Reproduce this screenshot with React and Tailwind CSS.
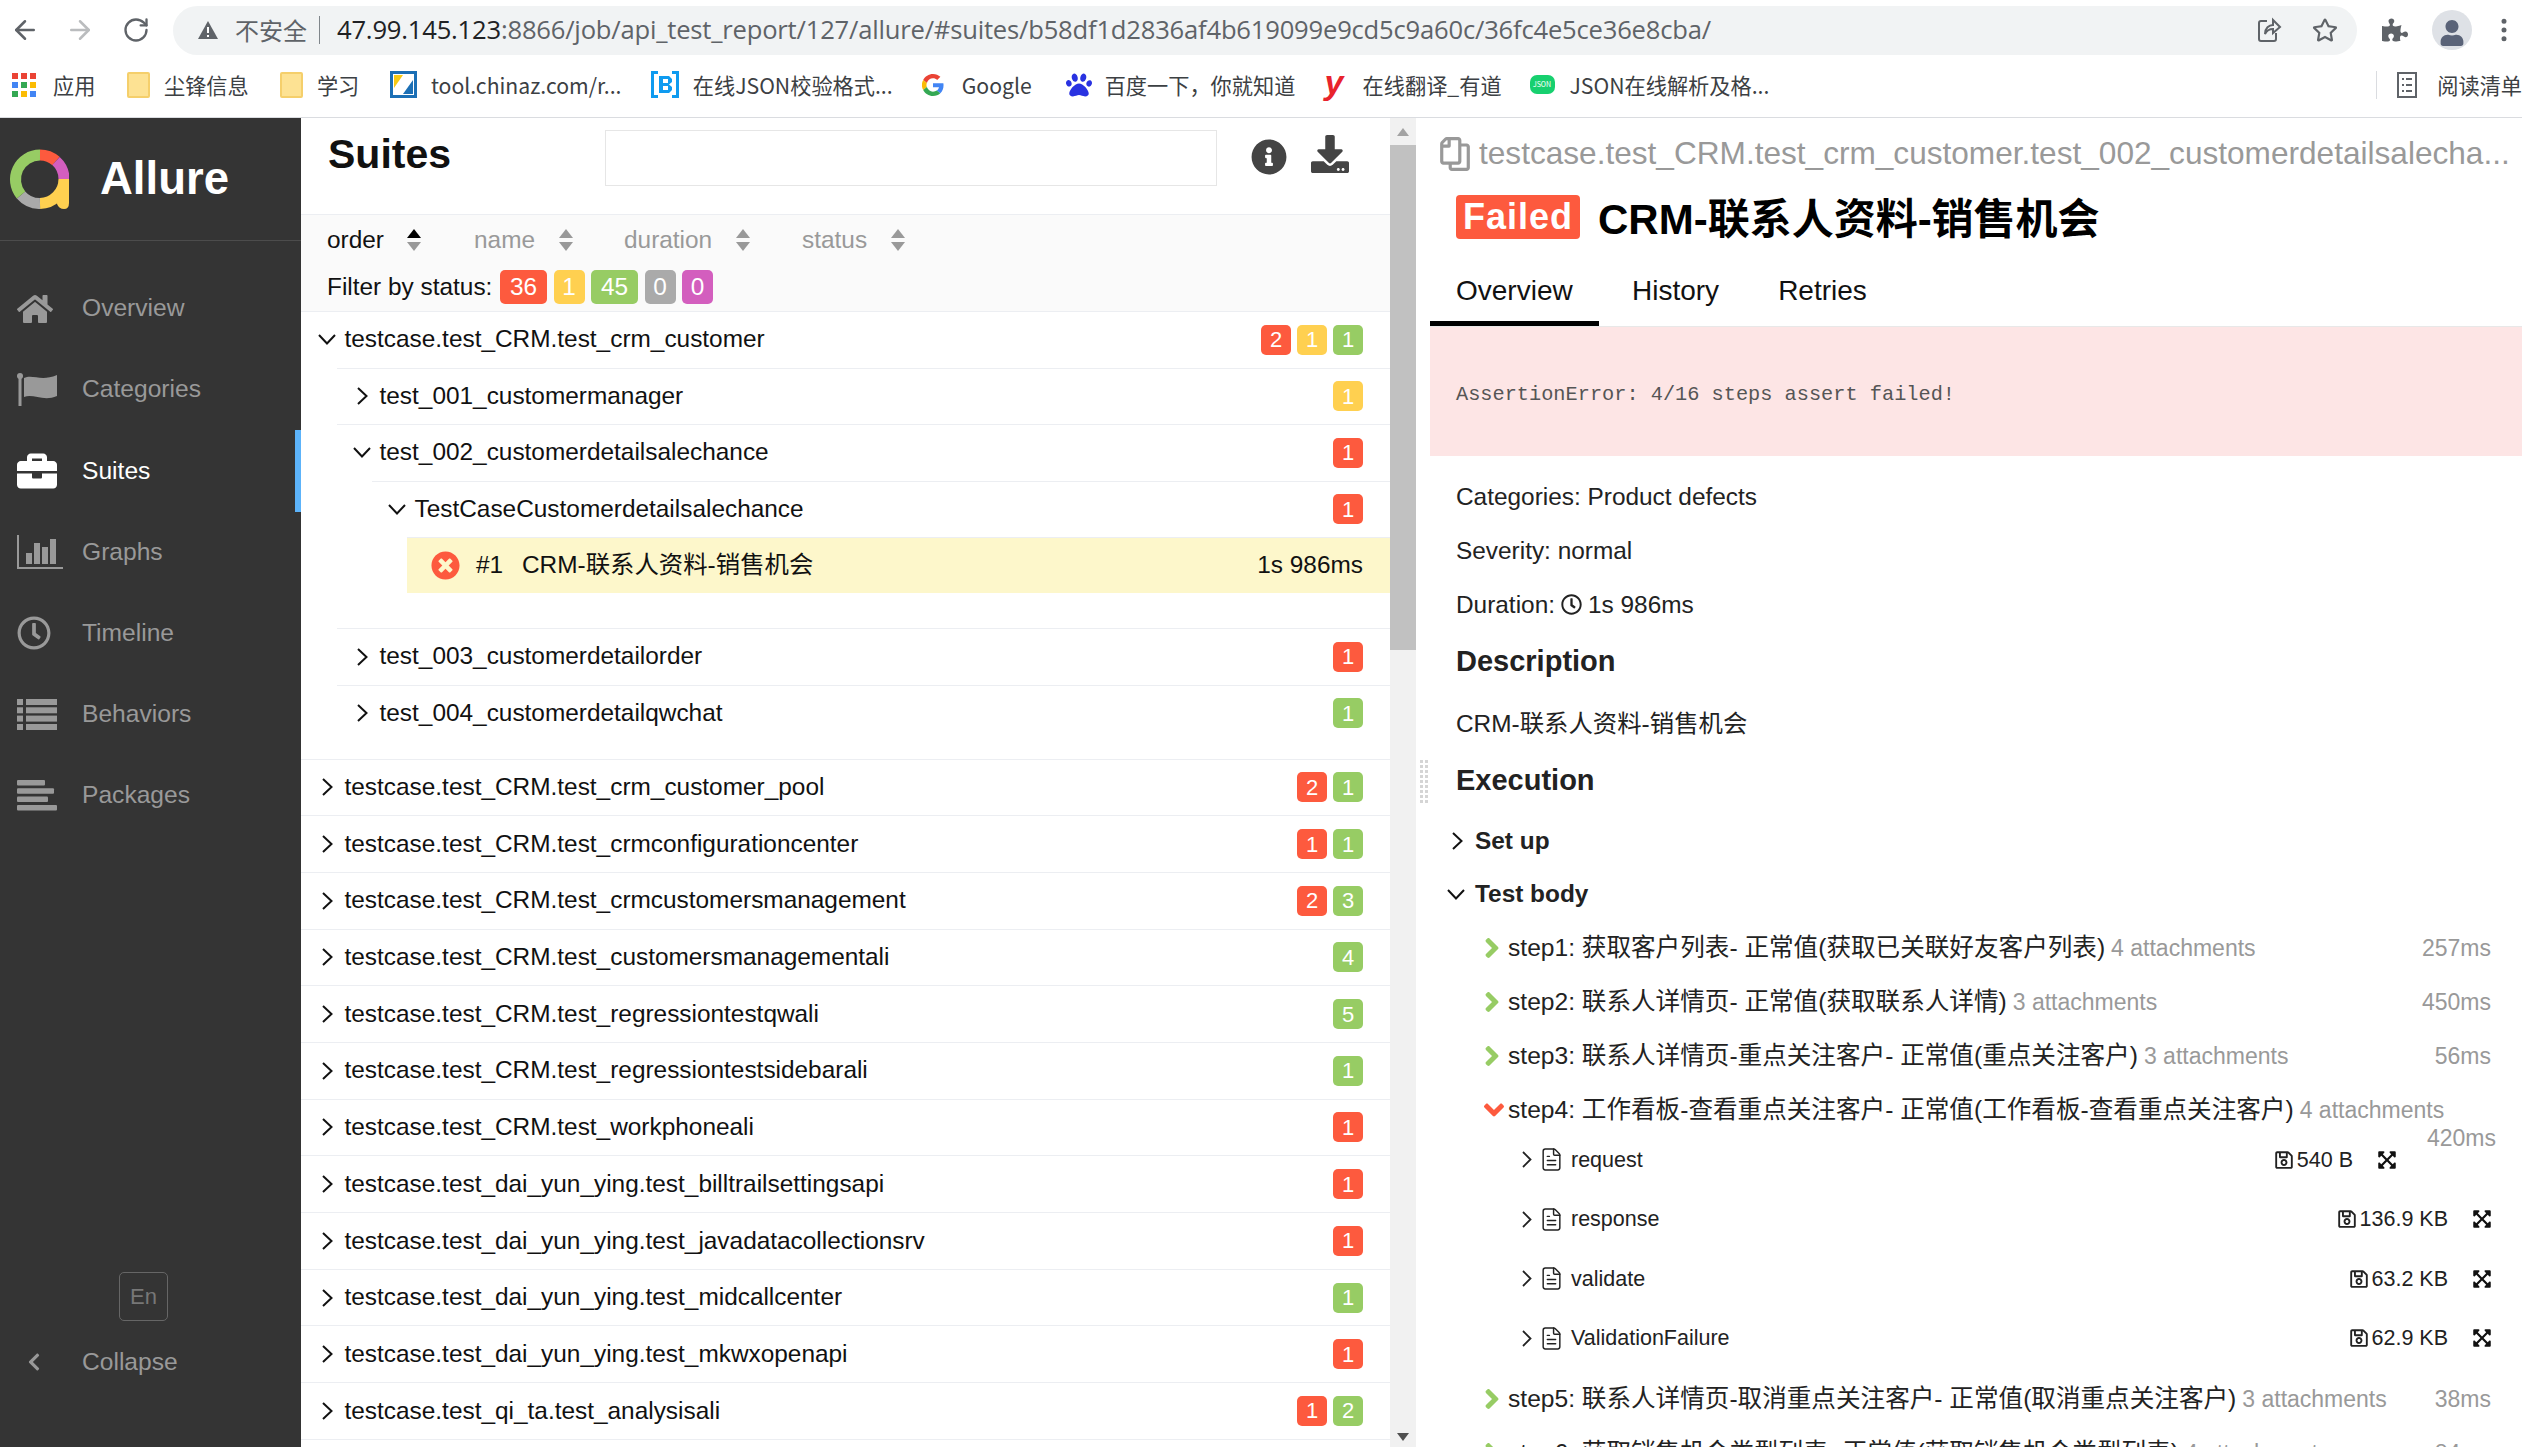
import {
  FaHome, FaBriefcase, FaRegClock, FaInfoCircle, FaDownload, FaTimesCircle, FaRegSave,
  FaExpandArrowsAlt, FaAngleRight, FaAngleDown, FaRegCopy, FaPuzzlePiece, FaRegStar, FaUser, FaPaw, FaChevronLeft,
} from 'react-icons/fa'
import { ArrowLeft, ArrowRight, RotateCw, EllipsisVertical, FileText } from 'lucide-react'

const sans = "font-['Liberation_Sans','Noto_Sans_CJK_SC',sans-serif]"

function FlagIcon() {
  return (
    <svg width="40" height="33" viewBox="0 0 40 33" fill="currentColor">
      <circle cx="3" cy="3" r="3" /><rect x="1.500" y="3" width="3" height="30" />
      <path d="M7 5 C16 1 24 9 40 2 V23 C26 29 16 20 7 24 Z" />
    </svg>
  )
}

function GraphIcon() {
  return (
    <svg width="46" height="34" viewBox="0 0 46 34" fill="currentColor" className="overflow-visible">
      <rect x="0" y="0" width="2" height="34" /><rect x="0" y="32" width="46" height="2" />
      <rect x="9" y="18" width="6" height="11" /><rect x="17" y="8" width="6" height="21" />
      <rect x="25" y="12" width="6" height="17" /><rect x="33" y="4" width="6" height="25" />
    </svg>
  )
}

function ListIcon() {
  return (
    <svg width="40" height="31" viewBox="0 0 40 31" fill="currentColor">
      {[0, 8.300, 16.600, 25].map((y) => (
        <g key={y}><rect x="0" y={y} width="6" height="6" /><rect x="9" y={y} width="31" height="6" /></g>
      ))}
    </svg>
  )
}

function PackagesIcon() {
  return (
    <svg width="40" height="31" viewBox="0 0 40 31" fill="currentColor">
      <rect x="0" y="0" width="28" height="5.500" rx="1" /><rect x="0" y="8.300" width="37" height="5.500" rx="1" />
      <rect x="0" y="16.600" width="31" height="5.500" rx="1" /><rect x="0" y="25" width="40" height="5.500" rx="1" />
    </svg>
  )
}

const nav = [
  { icon: <FaHome className="h-[36px] w-[36px]" />, label: 'Overview' },
  { icon: <FlagIcon />, label: 'Categories' },
  { icon: <FaBriefcase className="h-[40px] w-[40px]" />, label: 'Suites', active: true },
  { icon: <GraphIcon />, label: 'Graphs' },
  { icon: <FaRegClock className="h-[34px] w-[34px]" />, label: 'Timeline' },
  { icon: <ListIcon />, label: 'Behaviors' },
  { icon: <PackagesIcon />, label: 'Packages' },
]

const suites = [
  ['testcase.test_CRM.test_crm_customer_pool', [['f', 2], ['p', 1]]],
  ['testcase.test_CRM.test_crmconfigurationcenter', [['f', 1], ['p', 1]]],
  ['testcase.test_CRM.test_crmcustomersmanagement', [['f', 2], ['p', 3]]],
  ['testcase.test_CRM.test_customersmanagementali', [['p', 4]]],
  ['testcase.test_CRM.test_regressiontestqwali', [['p', 5]]],
  ['testcase.test_CRM.test_regressiontestsidebarali', [['p', 1]]],
  ['testcase.test_CRM.test_workphoneali', [['f', 1]]],
  ['testcase.test_dai_yun_ying.test_billtrailsettingsapi', [['f', 1]]],
  ['testcase.test_dai_yun_ying.test_javadatacollectionsrv', [['f', 1]]],
  ['testcase.test_dai_yun_ying.test_midcallcenter', [['p', 1]]],
  ['testcase.test_dai_yun_ying.test_mkwxopenapi', [['f', 1]]],
  ['testcase.test_qi_ta.test_analysisali', [['f', 1], ['p', 2]]],
]

const badgeBg = { f: 'bg-[#fd5a3e]', b: 'bg-[#ffd050]', p: 'bg-[#97cc64]', s: 'bg-[#aaaaaa]', u: 'bg-[#d35ebe]' }

function Badge({ kind, n }) {
  return (
    <span className={`flex h-[30px] w-[30px] items-center justify-center rounded-[5px] text-[22px] text-white ${badgeBg[kind]}`}>{n}</span>
  )
}

function SortIcon({ up }) {
  return (
    <svg width="16" height="24" viewBox="0 0 16 24" className="ml-[22.500px]">
      <path d="M8 1 L15 10 H1 Z" fill={up ? '#000' : '#999'} />
      <path d="M8 23 L15 14 H1 Z" fill="#999" />
    </svg>
  )
}

function Chevron({ open, className = 'text-[#111]' }) {
  return (
    <span className={`flex w-[22px] shrink-0 items-center justify-center ${className}`}>
      {open ? (
        <svg width="18" height="11" viewBox="0 0 18 11" fill="none" stroke="currentColor" strokeWidth="2"><path d="M1 1 L9 9.500 L17 1" /></svg>
      ) : (
        <svg width="11" height="18" viewBox="0 0 11 18" fill="none" stroke="currentColor" strokeWidth="2"><path d="M1 1 L9.500 9 L1 17" /></svg>
      )}
    </span>
  )
}

// one row of the suite tree, indent is the x of the row's left edge in the pane
function TreeRow({ name, open, badges, indent, last, tall }) {
  const height = last ? 'h-[55.500px]' : tall ? 'h-[56.700px] border-b border-[#eceef2]' : 'h-[56.500px] border-b border-[#eceef2]'
  return (
    <div className={`pr-[27px] ${height}`}>
      <div className="flex h-full items-center" style={{ paddingLeft: indent }}>
        <Chevron open={open} />
        <span className="ml-[6.500px] flex-1 text-[24.400px] text-[#111]">{name}</span>
        <span className="flex gap-[6px]">
          {badges.map(([k, n], i) => <Badge key={i} kind={k} n={n} />)}
        </span>
      </div>
    </div>
  )
}

function Step({ name, att, ms }) {
  return (
    <div className="flex h-[54px] items-center pl-[55px] pr-[31px]">
      <FaAngleRight size={32} className="-ml-[3px] w-[20px] shrink-0 text-[#97cc64]" />
      <span className="ml-[6px] text-[24.600px] text-[#222]">{name}</span>
      <span className="ml-[6px] flex-1 text-[23px] text-[#999]">{att}</span>
      <span className="text-[23px] text-[#999]">{ms}</span>
    </div>
  )
}

function Attachment({ name, size, first }) {
  return (
    <div className={`flow-root ${first ? '-mt-[7px]' : ''}`}>
      <div className="flex h-[59.500px] items-center pl-[92px] pr-[30px]">
        <svg width="10" height="17" viewBox="0 0 10 17" fill="none" stroke="#222" strokeWidth="1.800" className="shrink-0"><path d="M1 1 L8.500 8.500 L1 16" /></svg>
        <FileText size={25} strokeWidth={1.400} className="ml-[7px] shrink-0 text-[#222]" />
        <span className="ml-[7px] flex-1 text-[21.500px] text-[#222]">{name}</span>
        <FaRegSave size={20} className="mr-[3px] text-[#222]" />
        <span className="text-[21.500px] text-[#222]">{size}</span>
        <FaExpandArrowsAlt size={20} className="ml-[24px] text-[#111]" />
      </div>
    </div>
  )
}

function Bookmark({ icon, label, w }) {
  return (
    <div className="flex items-center" style={{ width: w }}>
      {icon}
      <span className="whitespace-nowrap">{label}</span>
    </div>
  )
}

function Folder() {
  return <span className="mr-[14px] h-[26px] w-[23px] rounded-[2px] border-2 border-[#f5cf6b] bg-[#fde293]" />
}

function AppsGrid() {
  const c = ['#ea4335', '#ea4335', '#ea4335', '#4285f4', '#34a853', '#fbbc04', '#34a853', '#fbbc04', '#4285f4']
  return (
    <span className="mr-[17px] grid h-[24px] w-[24px] grid-cols-3 gap-[3px]">
      {c.map((col, i) => <span key={i} style={{ background: col }} />)}
    </span>
  )
}

function ShareIcon() {
  return (
    <svg width="28" height="28" viewBox="0 0 28 28" fill="none" stroke="#5f6368" strokeWidth="2" className="ml-auto shrink-0">
      <path d="M12 5 H6 a2 2 0 0 0 -2 2 V23 a2 2 0 0 0 2 2 H19 a2 2 0 0 0 2 -2 V17" />
      <path d="M10 18 C10 12 14 9 18 9 V4 L25 11 L18 17 V13 C14 13 11.500 15 10 18 Z" />
    </svg>
  )
}

function ChromeBar() {
  return (
    <div className="h-[118px] border-b border-[#dadce0] bg-white font-['Noto_Sans_CJK_SC','Open_Sans',sans-serif] text-[#5f6368]">
      <div className="flex h-[59px] items-center pt-[1px]">
        <ArrowLeft size={30} className="ml-[10px] text-[#5f6368]" />
        <ArrowRight size={30} className="ml-[25px] text-[#babcbe]" />
        <RotateCw size={28} className="ml-[27px] text-[#5f6368]" />
        <div className="ml-[23px] flex h-[49px] w-[2184px] items-center rounded-full bg-[#f1f3f4] pl-[24px] pr-[19px]">
          <svg width="22" height="20" viewBox="0 0 22 20"><path d="M11 1 L21 19 H1 Z" fill="#5f6368" /><rect x="10" y="7" width="2" height="6" fill="#fff" /><rect x="10" y="15" width="2" height="2" fill="#fff" /></svg>
          <span className="ml-[16px] text-[24px] leading-none">不安全</span>
          <span className="ml-[12px] h-[28px] w-[1px] bg-[#80868b]" />
          <span className="ml-[17px] font-['Open_Sans',sans-serif] text-[25.600px] tracking-[-0.2px]">
            <span className="text-[#202124]">47.99.145.123</span>:8866/job/api_test_report/127/allure/#suites/b58df1d2836af4b619099e9cd5c9a60c/36fc4e5ce36e8cba/
          </span>
          <ShareIcon />
          <FaRegStar size={26} className="ml-[29px] text-[#5f6368]" />
        </div>
        <FaPuzzlePiece size={26} className="ml-[25px] text-[#5f6368]" />
        <span className="ml-[24px] flex h-[40px] w-[40px] items-center justify-center overflow-hidden rounded-full bg-[#dee1e6]">
          <FaUser size={26} className="mt-[6px] text-[#5a6378]" />
        </span>
        <EllipsisVertical size={30} className="ml-[17px] text-[#5f6368]" />
      </div>
      <div className="-mt-[3px] flex h-[58px] items-center pl-[12px] text-[21.200px] text-[#3c4043]">
        <Bookmark w={115} icon={<AppsGrid />} label="应用" />
        <Bookmark w={153} icon={<Folder />} label="尘锋信息" />
        <Bookmark w={110} icon={<Folder />} label="学习" />
        <Bookmark
          w={261}
          icon={
            <svg width="27" height="27" viewBox="0 0 27 27" className="mr-[14px] shrink-0">
              <rect x="1.500" y="1.500" width="24" height="24" fill="#fff" stroke="#1b6fb5" strokeWidth="3" />
              <path d="M4 4 L13 4 L4 17 Z" fill="#f6c915" /><path d="M23 9 V23 H13 Z" fill="#1b6fb5" />
            </svg>
          }
          label="tool.chinaz.com/r..."
        />
        <Bookmark
          w={271}
          icon={
            <svg width="28" height="27" viewBox="0 0 28 27" className="mr-[14px] shrink-0">
              <path d="M7 1.500 H1.500 V25.500 H7 M21 1.500 H26.500 V25.500 H21" fill="none" stroke="#0f9bf0" strokeWidth="3" />
              <path d="M8 5 H18 L21 8 V11 L18 13.500 L21 16 V19 L18 22 H8 Z M12 8 V12 H17 V8 Z M12 15 V19 H17 V15 Z" fill="#0f9bf0" fillRule="evenodd" />
            </svg>
          }
          label="在线JSON校验格式..."
        />
        <Bookmark
          w={144}
          icon={
            <svg width="22" height="24" viewBox="0 0 48 48" className="mr-[18px] shrink-0">
              <path fill="#ea4335" d="M24 9.500c3.500 0 6.700 1.200 9.200 3.600l6.900-6.900C35.900 2.400 30.500 0 24 0 14.600 0 6.500 5.400 2.600 13.200l8 6.200C12.500 13.700 17.800 9.500 24 9.500z" />
              <path fill="#4285f4" d="M47 24.500c0-1.600-.1-3.100-.4-4.500H24v9h13c-.6 3-2.200 5.500-4.800 7.200l7.700 6C44.400 38.100 47 31.900 47 24.500z" />
              <path fill="#fbbc05" d="M10.500 28.600A14.500 14.500 0 0 1 10.500 19.400l-8-6.200a24 24 0 0 0 0 21.600z" />
              <path fill="#34a853" d="M24 48c6.500 0 11.900-2.100 15.900-5.800l-7.700-6c-2.200 1.400-4.900 2.300-8.200 2.300-6.200 0-11.500-4.200-13.400-9.900l-8 6.200C6.500 42.600 14.600 48 24 48z" />
            </svg>
          }
          label="Google"
        />
        <Bookmark w={259} icon={<FaPaw size={26} className="mr-[13px] shrink-0 text-[#2932e1]" />} label="百度一下，你就知道" />
        <Bookmark
          w={205}
          icon={<span className="-mt-[6px] mr-[18px] w-[20px] font-['Liberation_Sans',sans-serif] text-[34px] font-bold italic leading-[24px] text-[#e8232c]">y</span>}
          label="在线翻译_有道"
        />
        <Bookmark
          w={847}
          icon={<span className="mr-[15px] flex h-[19px] w-[25px] items-center justify-center rounded-[7px] bg-[#17d06f] text-[7px] leading-none text-white">JSON</span>}
          label="JSON在线解析及格..."
        />
        <span className="h-[28px] w-[1px] bg-[#dadce0]" />
        <svg width="20" height="26" viewBox="0 0 20 26" className="ml-[20px] shrink-0">
          <rect x="1" y="1" width="18" height="24" fill="none" stroke="#5f6368" strokeWidth="2" />
          <path d="M5 7 H7 M9 7 H15 M5 13 H7 M9 13 H15 M5 19 H7 M9 19 H15" stroke="#5f6368" strokeWidth="2" />
        </svg>
        <span className="ml-[20px] whitespace-nowrap">阅读清单</span>
      </div>
    </div>
  )
}

function Logo() {
  return (
    <svg width="62" height="60" viewBox="0 0 62 60" className="shrink-0">
      <g fill="none" strokeWidth="11">
        <path d="M33 6 A24.500 24.500 0 0 1 49 12" stroke="#fd5a3e" />
        <path d="M49 12 A24.500 24.500 0 0 1 57 30" stroke="#d35ebe" />
        <path d="M57 30 A24.500 24.500 0 0 1 33 54.500" stroke="#ffd050" />
        <path d="M33 54.500 A24.500 24.500 0 0 1 14 46" stroke="#aaaaaa" />
        <path d="M14 46 A24.500 24.500 0 0 1 33 6" stroke="#97cc64" />
      </g>
      <path d="M52 30 H62 V54 Q62 60 57 60 Q52 60 50 55 Z" fill="#ffd050" />
    </svg>
  )
}

function Sidebar() {
  return (
    <div className={`flex w-[301px] shrink-0 flex-col bg-[#343434] text-[#999] ${sans}`}>
      <div className="flex h-[123px] items-center border-b border-[#4c4c4c] pl-[7px]">
        <Logo />
        <span className="ml-[31px] text-[45.500px] font-bold text-white">Allure</span>
      </div>
      <div className="mt-[27px]">
        {nav.map(({ icon, label, active }) => (
          <div key={label} className={`relative flex h-[81.200px] items-center pl-[17px] text-[24.600px] ${active ? 'text-white' : 'text-[#999]'}`}>
            <span className="flex w-[40px] shrink-0 items-center">{icon}</span>
            <span className="ml-[25px]">{label}</span>
            {active && <span className="absolute right-0 top-0 h-full w-[6px] bg-[#5cb3fa]" />}
          </div>
        ))}
      </div>
      <div className="mt-auto pb-[60px]">
        <div className="ml-[119px] flex h-[49px] w-[49px] items-center justify-center rounded-[5px] border border-[#666] text-[22px] text-[#777]">En</div>
        <div className="mt-[16px] flex h-[50px] items-center pl-[24px] text-[24.600px]">
          <FaChevronLeft size={20} className="w-[20px] shrink-0" />
          <span className="ml-[38px]">Collapse</span>
        </div>
      </div>
    </div>
  )
}

function SuitesPane() {
  return (
    <div className={`w-[1089px] shrink-0 overflow-hidden bg-white ${sans}`}>
      <div className="flex h-[97px] items-start border-b border-[#eceef2] pl-[27px]">
        <h1 className="mt-[11px] w-[277px] text-[41px] font-bold leading-[50px] text-[#111]">Suites</h1>
        <div className="mt-[12px] h-[56px] w-[612px] border border-[#e6e6e6]" />
        <FaInfoCircle size={36} className="ml-[34px] mt-[21px] text-[#444]" />
        <FaDownload size={38} className="ml-[24px] mt-[17px] text-[#444]" />
      </div>
      <div className="h-[97px] border-b border-[#eceef2] bg-[#fafafa] pl-[26px] text-[24.400px]">
        <div className="flex h-[46px] items-center pt-[4px]">
          <span className="flex w-[147px] items-center text-[#111]">order<SortIcon up /></span>
          <span className="flex w-[150px] items-center text-[#999]">name<SortIcon /></span>
          <span className="flex w-[178px] items-center text-[#999]">duration<SortIcon /></span>
          <span className="flex items-center text-[#999]">status<SortIcon /></span>
        </div>
        <div className="mt-[4px] flex h-[44px] items-center">
          <span className="w-[173px] text-[#111]">Filter by status:</span>
          <div className="flex gap-[6.500px] text-white">
            <span className="flex h-[34px] w-[47px] items-center justify-center rounded-[5px] bg-[#fd5a3e]">36</span>
            <span className="flex h-[34px] w-[31px] items-center justify-center rounded-[5px] bg-[#ffd050]">1</span>
            <span className="flex h-[34px] w-[47px] items-center justify-center rounded-[5px] bg-[#97cc64]">45</span>
            <span className="flex h-[34px] w-[31px] items-center justify-center rounded-[5px] bg-[#aaaaaa]">0</span>
            <span className="flex h-[34px] w-[31px] items-center justify-center rounded-[5px] bg-[#d35ebe]">0</span>
          </div>
        </div>
      </div>

      <TreeRow name="testcase.test_CRM.test_crm_customer" open badges={[['f', 2], ['b', 1], ['p', 1]]} indent={15} last />
      <div className="ml-[36px] border-t border-[#eceef2]">
        <TreeRow name="test_001_customermanager" badges={[['b', 1]]} indent={14} />
        <TreeRow name="test_002_customerdetailsalechance" open badges={[['f', 1]]} indent={14} last />
        <div className="ml-[35px] border-t border-[#eceef2]">
          <TreeRow name="TestCaseCustomerdetailsalechance" open badges={[['f', 1]]} indent={14} last />
          <div className="ml-[35px] flex h-[56px] items-center border-t border-[#eceef2] bg-[#fdf7cb] pl-[24px] pr-[27px] text-[24.400px] text-[#111]">
            <FaTimesCircle size={29} className="shrink-0 text-[#fd5a3e]" />
            <span className="ml-[16px] w-[46px]">#1</span>
            <span className="flex-1">CRM-联系人资料-销售机会</span>
            <span>1s 986ms</span>
          </div>
          <div className="h-[35px]" />
        </div>
        <div className="border-t border-[#eceef2]">
          <TreeRow name="test_003_customerdetailorder" badges={[['f', 1]]} indent={14} />
          <TreeRow name="test_004_customerdetailqwchat" badges={[['p', 1]]} indent={14} last />
        </div>
      </div>
      <div className="h-[18.500px] border-b border-[#eceef2]" />
      {suites.map(([name, badges]) => (
        <TreeRow key={name} name={name} badges={badges} indent={15} tall />
      ))}
    </div>
  )
}

function Scrollbar() {
  return (
    <div className="relative w-[40px] shrink-0 bg-white">
      <div className="h-[1329px] w-[26px] bg-[#f1f1f1]">
        <div className="flex h-[27px] items-center justify-center">
          <span className="h-0 w-0 border-x-[6px] border-b-[8px] border-x-transparent border-b-[#a3a3a3]" />
        </div>
        <div className="h-[505px] bg-[#c1c1c1]" />
      </div>
      <span className="absolute bottom-[6px] left-[7px] h-0 w-0 border-x-[6px] border-t-[8px] border-x-transparent border-t-[#505050]" />
      <div className="absolute left-[30px] top-[642px] grid grid-cols-2 gap-[2px]">
        {Array.from({ length: 18 }).map((_, i) => <span key={i} className="h-[3px] w-[3px] bg-[#d5d5d5]" />)}
      </div>
    </div>
  )
}

function DetailPane() {
  return (
    <div className={`flex-1 overflow-hidden bg-white text-[#222] ${sans}`}>
      <div className="flex h-[70px] items-center pl-[8px] pt-[1px] text-[#999]">
        <FaRegCopy size={34} className="shrink-0 -scale-x-100" />
        <span className="ml-[7px] whitespace-nowrap text-[31.600px]">testcase.test_CRM.test_crm_customer.test_002_customerdetailsalecha...</span>
      </div>
      <div className="flex h-[62px] items-center pl-[26px]">
        <span className="-mt-[4px] flex h-[44px] w-[124px] items-center justify-center rounded-[4px] bg-[#fd5a3e] text-[36px] font-bold tracking-[1px] text-white">Failed</span>
        <span className="ml-[18px] text-[42px] font-bold text-black">CRM-联系人资料-销售机会</span>
      </div>
      <div className="flex h-[77px] border-b border-[#e8e8e8] text-[28px] text-[#111]">
        <div className="flex h-[76px] w-[169px] items-center border-b-[5px] border-black pl-[26px] pt-[10px]">Overview</div>
        <div className="ml-[33px] flex h-[76px] items-center pt-[6px]">History</div>
        <div className="ml-[59px] flex h-[76px] items-center pt-[6px]">Retries</div>
      </div>
      <div className="flex h-[129px] items-center bg-[#fde5e5] pl-[26px] pt-[7px] font-['Liberation_Mono',monospace] text-[20.300px] text-[#555]">
        AssertionError: 4/16 steps assert failed!
      </div>
      <div className="pl-[26px] text-[24.400px]">
        <p className="mt-[22px] leading-[37px]">Categories: Product defects</p>
        <p className="mt-[17px] leading-[37px]">Severity: normal</p>
        <p className="mt-[17px] flex items-center leading-[37px]">Duration:<FaRegClock size={21} className="mx-[6px]" />1s 986ms</p>
        <h3 className="mt-[18px] text-[29px] font-bold leading-[40px]">Description</h3>
        <p className="mt-[24px] leading-[37px]">CRM-联系人资料-销售机会</p>
        <h3 className="mt-[18px] text-[29px] font-bold leading-[40px]">Execution</h3>
      </div>
      <div className="mt-[21px] flex h-[40px] items-center pl-[16px] text-[24.400px] font-bold">
        <Chevron />
        <span className="ml-[7px]">Set up</span>
      </div>
      <div className="mt-[13px] flex h-[40px] items-center pl-[15px] text-[24.400px] font-bold">
        <Chevron open />
        <span className="ml-[8px]">Test body</span>
      </div>
      <div className="mt-[7px]">
        <Step name="step1: 获取客户列表- 正常值(获取已关联好友客户列表)" att="4 attachments" ms="257ms" />
        <Step name="step2: 联系人详情页- 正常值(获取联系人详情)" att="3 attachments" ms="450ms" />
        <Step name="step3: 联系人详情页-重点关注客户- 正常值(重点关注客户)" att="3 attachments" ms="56ms" />
        <div className="flex h-[54px] items-center pl-[52px] pr-[31px]">
          <FaAngleDown size={32} className="w-[24px] shrink-0 text-[#fd5a3e]" />
          <span className="ml-[2px] text-[24.600px] text-[#222]">step4: 工作看板-查看重点关注客户- 正常值(工作看板-查看重点关注客户)</span>
          <span className="ml-[6px] flex-1 text-[23px] text-[#999]">4 attachments</span>
        </div>
        <div className="float-right mr-[31px] -mt-[25px] h-[50px] w-[64px] pt-[9px] text-right text-[23px] text-[#999]">420ms</div>
        <Attachment first name="request" size="540 B" />
        <Attachment name="response" size="136.9 KB" />
        <Attachment name="validate" size="63.2 KB" />
        <Attachment name="ValidationFailure" size="62.9 KB" />
        <div className="mt-[4px]">
          <Step name="step5: 联系人详情页-取消重点关注客户- 正常值(取消重点关注客户)" att="3 attachments" ms="38ms" />
          <Step name="step6: 获取销售机会类型列表- 正常值(获取销售机会类型列表)" att="4 attachments" ms="84ms" />
        </div>
      </div>
    </div>
  )
}

export default function App() {
  return (
    <div className="flex h-[1447px] w-full flex-col overflow-hidden bg-white">
      <ChromeBar />
      <div className="flex min-h-0 flex-1">
        <Sidebar />
        <SuitesPane />
        <Scrollbar />
        <DetailPane />
      </div>
    </div>
  )
}
